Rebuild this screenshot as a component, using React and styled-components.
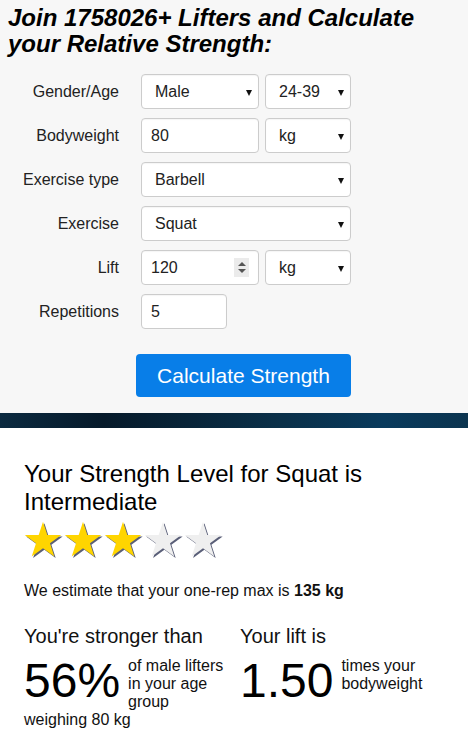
import React from "react";
import styled, { createGlobalStyle } from "styled-components";

const Global = createGlobalStyle`
  html, body { margin: 0; padding: 0; background: #fff; }
  body { font-family: "Liberation Sans", Arial, sans-serif; color: #111; }
  * { box-sizing: border-box; }
`;

const Top = styled.section`
  background: #f7f7f7;
  padding: 5px 8px 16px;
`;

const Title = styled.h2`
  margin: 0;
  font-size: 24px;
  line-height: 26px;
  font-weight: bold;
  font-style: italic;
  color: #000;
`;

const Form = styled.div`
  margin-top: 17px;
  display: grid;
  grid-template-columns: 111px auto;
  column-gap: 22px;
  row-gap: 9px;
  align-items: center;
`;

const Label = styled.label`
  text-align: right;
  font-size: 16px;
  line-height: 18px;
  color: #222;
`;

const Controls = styled.div`
  display: flex;
  gap: 6px;
`;

const Field = styled.div`
  position: relative;
  width: ${(p) => p.$w}px;
  height: 35px;
  background: #fff;
  border: 1px solid #ccc;
  border-radius: 4px;
  box-shadow: inset 0 1px 1px rgba(0, 0, 0, 0.04);
  display: flex;
  align-items: center;
  padding-left: ${(p) => (p.$select ? 13 : 9)}px;
  font-size: 16px;
  color: #222;
`;

const Arrow = styled.span`
  position: absolute;
  right: 6px;
  top: 15px;
  width: 0;
  height: 0;
  border-left: 3px solid transparent;
  border-right: 3px solid transparent;
  border-top: 6px solid #111;
`;

const Spinner = styled.span`
  position: absolute;
  right: 9px;
  top: 7px;
  width: 15px;
  height: 19px;
  background: #ebebeb;
  display: flex;
  flex-direction: column;
  align-items: center;
  justify-content: center;
  gap: 3px;
`;

const Tri = styled.span`
  width: 0;
  height: 0;
  border-left: 4px solid transparent;
  border-right: 4px solid transparent;
  ${(p) => (p.$up ? "border-bottom: 4px solid #555;" : "border-top: 4px solid #555;")}
`;

const Button = styled.button`
  margin: 25px 0 0 128px;
  width: 215px;
  height: 43px;
  border: none;
  border-radius: 4px;
  background: #087ee8;
  color: #fff;
  font-family: "Liberation Sans", Arial, sans-serif;
  font-size: 21px;
  display: block;
  padding: 0;
`;

const Strip = styled.div`
  height: 15px;
  background: linear-gradient(
    90deg,
    #0b2a40 0%,
    #061a2a 22%,
    #082438 40%,
    #0a3049 60%,
    #093a5c 82%,
    #0b344f 100%
  );
`;

const Results = styled.section`
  padding: 32px 24px 0;
`;

const LevelTitle = styled.h1`
  margin: 0;
  font-size: 24px;
  line-height: 28px;
  font-weight: normal;
  color: #000;
`;

const Stars = styled.div`
  margin-top: 6px;
  display: flex;
  gap: 1px;
  height: 36px;
`;

const Estimate = styled.p`
  margin: 24px 0 0;
  font-size: 16px;
  line-height: 18px;
  color: #111;
  b { font-weight: bold; }
`;

const Stats = styled.div`
  margin-top: 25px;
  display: flex;
`;

const Stat = styled.div`
  width: ${(p) => p.$w || "auto"};
`;

const StatTitle = styled.div`
  font-size: 20px;
  line-height: 23px;
  color: #111;
`;

const StatRow = styled.div`
  margin-top: 9px;
  display: flex;
  align-items: flex-start;
  gap: 8px;
`;

const Big = styled.div`
  font-size: 48px;
  line-height: 48px;
  color: #000;
`;

const Desc = styled.div`
  width: 100px;
  font-size: 16px;
  line-height: 18px;
  color: #111;
`;

const After = styled.div`
  font-size: 16px;
  line-height: 18px;
  color: #111;
`;

function starPoints(cx, cy, R) {
  const r = R * 0.382;
  const pts = [];
  for (let i = 0; i < 10; i++) {
    const a = (-90 + i * 36) * (Math.PI / 180);
    const rad = i % 2 === 0 ? R : r;
    pts.push(`${(cx + rad * Math.cos(a)).toFixed(2)},${(cy + rad * Math.sin(a)).toFixed(2)}`);
  }
  return pts.join(" ");
}

function Star({ filled }) {
  const pts = starPoints(19, 19, 19.2);
  return (
    <svg width="39" height="36" viewBox="0 0 39 36">
      <polygon points={pts} transform="translate(1.4 1.4)" fill="#5a5f78" />
      <polygon points={pts} fill={filled ? "#ffd500" : "#efefef"} />
    </svg>
  );
}

function Select({ w, value }) {
  return (
    <Field $w={w} $select>
      {value}
      <Arrow />
    </Field>
  );
}

export default function App() {
  return (
    <>
      <Global />
      <Top>
        <Title>
          Join 1758026+ Lifters and Calculate
          <br />
          your Relative Strength:
        </Title>
        <Form>
          <Label>Gender/Age</Label>
          <Controls>
            <Select w={118} value="Male" />
            <Select w={86} value="24-39" />
          </Controls>

          <Label>Bodyweight</Label>
          <Controls>
            <Field $w={118}>80</Field>
            <Select w={86} value="kg" />
          </Controls>

          <Label>Exercise type</Label>
          <Controls>
            <Select w={210} value="Barbell" />
          </Controls>

          <Label>Exercise</Label>
          <Controls>
            <Select w={210} value="Squat" />
          </Controls>

          <Label>Lift</Label>
          <Controls>
            <Field $w={118}>
              120
              <Spinner>
                <Tri $up />
                <Tri />
              </Spinner>
            </Field>
            <Select w={86} value="kg" />
          </Controls>

          <Label>Repetitions</Label>
          <Controls>
            <Field $w={86}>5</Field>
          </Controls>
        </Form>
        <Button>Calculate Strength</Button>
      </Top>
      <Strip />
      <Results>
        <LevelTitle>
          Your Strength Level for Squat is
          <br />
          Intermediate
        </LevelTitle>
        <Stars>
          <Star filled />
          <Star filled />
          <Star filled />
          <Star />
          <Star />
        </Stars>
        <Estimate>
          We estimate that your one-rep max is <b>135 kg</b>
        </Estimate>
        <Stats>
          <Stat $w="216px">
            <StatTitle>You're stronger than</StatTitle>
            <StatRow>
              <Big>56%</Big>
              <Desc>of male lifters in your age group</Desc>
            </StatRow>
            <After>weighing 80 kg</After>
          </Stat>
          <Stat>
            <StatTitle>Your lift is</StatTitle>
            <StatRow>
              <Big>1.50</Big>
              <Desc>times your bodyweight</Desc>
            </StatRow>
          </Stat>
        </Stats>
      </Results>
    </>
  );
}
